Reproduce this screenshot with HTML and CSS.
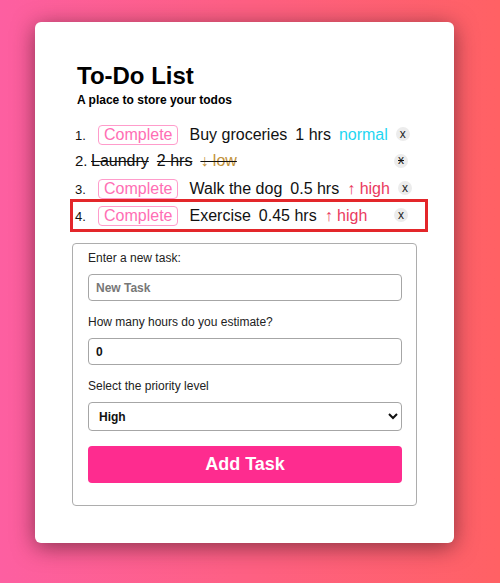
FILE: index.html
```html
<!DOCTYPE html>
<html lang="en">
<head>
<meta charset="utf-8">
<title>To-Do List</title>
<link rel="stylesheet" href="styles.css">
</head>
<body>
<main class="card">
  <header class="header">
    <h1 class="title">To-Do List</h1>
    <p class="subtitle">A place to store your todos</p>
  </header>
  <ol class="todos">
    <li class="todo">
      <span class="num">1.</span>
      <button class="complete">Complete</button>
      <span class="item">Buy groceries</span>
      <span class="item">1 hrs</span>
      <span class="item prio-normal">normal</span>
      <button class="remove">x</button>
    </li>
    <li class="todo done">
      <span class="num">2.</span>
      <span class="item">Laundry</span>
      <span class="item">2 hrs</span>
      <span class="item prio-low">↓ low</span>
      <span class="remove">x</span>
    </li>
    <li class="todo">
      <span class="num">3.</span>
      <button class="complete">Complete</button>
      <span class="item">Walk the dog</span>
      <span class="item">0.5 hrs</span>
      <span class="item prio-high">↑ high</span>
      <button class="remove">x</button>
    </li>
    <li class="todo selected">
      <span class="num">4.</span>
      <button class="complete">Complete</button>
      <span class="item">Exercise</span>
      <span class="item">0.45 hrs</span>
      <span class="item prio-high">↑ high</span>
      <button class="remove">x</button>
    </li>
  </ol>
  <form class="form">
    <label class="label" for="task">Enter a new task:</label>
    <input class="field" id="task" type="text" placeholder="New Task">
    <label class="label" for="hours">How many hours do you estimate?</label>
    <input class="field" id="hours" type="text" value="0">
    <label class="label" for="prio">Select the priority level</label>
    <select class="field select" id="prio">
      <option>High</option>
      <option>Normal</option>
      <option>Low</option>
    </select>
    <button class="add" type="button">Add Task</button>
  </form>
</main>
</body>
</html>
```

FILE: styles.css
```css
html, body {
  margin: 0;
  padding: 0;
}
body {
  width: 500px;
  height: 583px;
  overflow: hidden;
  background: linear-gradient(to right, #fd5fa1, #ff6164);
  font-family: "Liberation Sans", Arial, sans-serif;
  color: #111;
  padding-top: 22px;
  box-sizing: border-box;
}
.card {
  display: block;
  width: 419px;
  height: 521px;
  margin-left: 35px;
  box-sizing: border-box;
  padding: 40px 37px 37px 37px;
  background: #fff;
  border-radius: 6px;
  box-shadow: 0 4px 22px rgba(60, 20, 30, 0.6);
}
.header {
  padding-left: 5px;
}
.title {
  margin: 0;
  font-size: 24px;
  font-weight: bold;
  line-height: 27px;
  color: #000;
}
.subtitle {
  margin: 4px 0 0 0;
  font-size: 12px;
  font-weight: bold;
  line-height: 14px;
  color: #000;
}
.todos {
  list-style: none;
  margin: 14px -8px 0 1px;
  padding: 0;
  display: flex;
  flex-direction: column;
}
.todo {
  display: flex;
  align-items: baseline;
  box-sizing: border-box;
  height: 27px;
  padding: 4px 17px 0 2px;
  font-size: 16px;
}
.todo.selected {
  outline: 3px solid #e3262a;
  outline-offset: 0;
}
.num {
  width: 16px;
  flex: none;
  font-size: 13px;
  color: #111;
}
.done .num {
  font-size: 15px;
}
.complete {
  font-family: inherit;
  font-size: 16px;
  line-height: 18px;
  height: 20px;
  padding: 0 5px;
  margin: 0 11px 0 7px;
  background: #fff;
  color: #ff6eb4;
  border: 1px solid #ff9ccb;
  border-radius: 4px;
}
.done .item:first-of-type {
  margin-left: -1px;
}
.item {
  margin-right: 8px;
  white-space: nowrap;
}
.done .item,
.done .remove {
  text-decoration: line-through;
  text-decoration-color: #111;
}
.prio-normal {
  color: #1fd6f2;
}
.prio-high {
  color: #ea3a60;
}
.prio-low {
  color: #c2923a;
}
.remove {
  margin-left: auto;
  margin-top: 2px;
  align-self: flex-start;
  flex: none;
  width: 14px;
  height: 14px;
  padding: 0;
  border: none;
  border-radius: 50%;
  background: #ececec;
  color: #222;
  font-family: inherit;
  font-size: 12px;
  line-height: 13px;
  text-align: center;
  display: inline-block;
}
.form {
  display: flex;
  flex-direction: column;
  margin-top: 14px;
  border: 1px solid #adadad;
  border-radius: 4px;
  padding: 7px 14px 22px 15px;
}
.label {
  display: block;
  font-size: 12px;
  line-height: 14px;
  color: #222;
  margin-bottom: 9px;
}
.field {
  box-sizing: border-box;
  width: 100%;
  height: 27px;
  margin: 0 0 14px 0;
  padding: 0 7px;
  border: 1px solid #a6a6a6;
  border-radius: 4px;
  background: #fff;
  font-family: inherit;
  font-size: 12px;
  font-weight: bold;
  color: #111;
}
.field::placeholder {
  color: #777;
  font-weight: bold;
}
.select {
  height: 29px;
  padding: 0 6px;
  margin-bottom: 15px;
}
.add {
  height: 37px;
  border: none;
  border-radius: 4px;
  background: #fe2c8f;
  color: #fff;
  font-family: inherit;
  font-size: 18px;
  font-weight: bold;
}
```
